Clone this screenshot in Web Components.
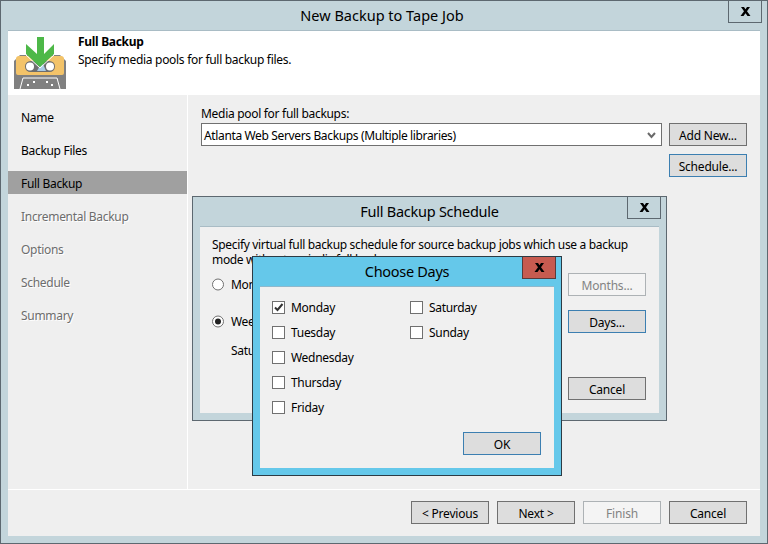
<!DOCTYPE html>
<html><head><meta charset="utf-8"><style>
html,body{margin:0;padding:0;background:#efefef}
body{font:12px "Noto Sans",sans-serif;color:#000;letter-spacing:-.3px}
</style></head><body>
<wizard-window title="New Backup to Tape Job">
  <step-header slot="header" heading="Full Backup" text="Specify media pools for full backup files."></step-header>
  <nav-item slot="nav">Name</nav-item>
  <nav-item slot="nav">Backup Files</nav-item>
  <nav-item slot="nav" selected>Full Backup</nav-item>
  <nav-item slot="nav" disabled>Incremental Backup</nav-item>
  <nav-item slot="nav" disabled>Options</nav-item>
  <nav-item slot="nav" disabled>Schedule</nav-item>
  <nav-item slot="nav" disabled>Summary</nav-item>
  <pool-pane slot="body"></pool-pane>
  <win-button slot="footer">&lt; Previous</win-button>
  <win-button slot="footer">Next &gt;</win-button>
  <win-button slot="footer" disabled>Finish</win-button>
  <win-button slot="footer">Cancel</win-button>
  <schedule-dialog slot="overlay" style="left:191px;top:195px"></schedule-dialog>
  <days-dialog slot="overlay" style="left:251px;top:255px"></days-dialog>
</wizard-window>
<script>
function def(name, html){
  customElements.define(name, class extends HTMLElement{
    connectedCallback(){
      if(this.shadowRoot) return;
      const r=this.attachShadow({mode:'open'});
      r.innerHTML=typeof html==='function'?html(this):html;
    }
  });
}
const X='<svg width="11" height="9" viewBox="0 0 11 9"><path d="M1 0h3l1.500 2.200L7 0h3L7 4.300 10.500 9h-3L5.500 6.300 3.500 9h-3L4 4.300z" fill="#000"/></svg>';
def('close-x',`<style>:host{position:absolute;top:0;width:34px;height:22px;box-sizing:border-box;border:1px solid var(--x-border,#5d6870);border-top:0;background:var(--x-bg,transparent);display:flex;align-items:center;justify-content:center}</style>${X}`);
def('win-button',`<style>
:host{display:flex;align-items:center;justify-content:center;box-sizing:border-box;width:78px;height:23px;padding-top:1px;border:1px solid #707070;background:#dddddd;font-size:12px;letter-spacing:-.2px;color:#000;flex:none}
:host([default]){border-color:#3c7fb1}
:host([disabled]){border-color:#adb2b5;background:#f4f4f4;color:#838383}
</style><slot></slot>`);
def('nav-item',`<style>
:host{display:flex;align-items:center;height:23px;box-sizing:border-box;padding:1px 0 0 13px;color:#000}
:host([selected]){background:#a0a0a0}
:host([disabled]){color:#6d6d6d;text-shadow:1px 1px 0 #fff}
</style><slot></slot>`);
def('check-box',h=>`<style>
:host{display:flex;align-items:center;height:25px;gap:6px}
i{display:flex;width:13px;height:13px;box-sizing:border-box;border:1px solid #707070;background:#fff;align-items:center;justify-content:center}
</style><i>${h.hasAttribute('checked')?'<svg width="11" height="11" viewBox="0 0 11 11"><path d="M2 5.500l2.500 2.500L9.500 2" fill="none" stroke="#333" stroke-width="2"/></svg>':''}</i><span><slot></slot></span>`);
def('radio-button',h=>`<style>
:host{display:flex;align-items:center;height:23px;gap:7px}
svg{flex:none}
</style><svg width="12" height="13" viewBox="0 0 12 13"><circle cx="6" cy="6.500" r="5.500" fill="#fff" stroke="#707070"/>${h.hasAttribute('checked')?'<circle cx="6" cy="6.500" r="3" fill="#222"/>':''}</svg><span><slot></slot></span>`);
def('combo-box',`<style>
:host{display:flex;align-items:center;flex:1;height:23px;box-sizing:border-box;border:1px solid #707070;background:#fff;padding:1px 5px 0 2px;justify-content:space-between;letter-spacing:-.36px}
</style><span><slot></slot></span><svg width="9" height="7" viewBox="0 0 9 7"><path d="M1 1l3.500 4L8 1" fill="none" stroke="#6a6a6a" stroke-width="2"/></svg>`);
def('step-icon',`<style>:host{display:block;width:52px;height:54px;flex:none}svg{display:block}</style>
<svg width="60" height="60" viewBox="14 35 60 60" style="overflow:visible">
<path d="M20 55H60L66 61V89H14V61Z" fill="#808080"/>
<path d="M19 56H61Q64 56 64 59V73Q64 75 62 75H18Q16 75 16 73V59Q16 56 19 56Z" fill="#f3c369"/>
<rect x="25" y="61" width="30" height="11" rx="5.500" fill="#6e6e6e"/>
<circle cx="30" cy="66.500" r="4" fill="#fff"/><circle cx="50" cy="66.500" r="4" fill="#fff"/>
<path d="M37 71L41 64H43L46 71Z" fill="#a9cbe6"/>
<path d="M20 89L23 78H57L60 89" fill="none" stroke="#fff"/>
<g fill="#fff"><rect x="27" y="84" width="2" height="2"/><rect x="33" y="81" width="2" height="2"/><rect x="46" y="81" width="2" height="2"/><rect x="51" y="84" width="2" height="2"/></g>
<path d="M26 44L37 54V37H44V54L54 44V54L40 67L26 54Z" fill="#4db848"/>
<path d="M26 55L40 68L54 55" fill="none" stroke="#fff" stroke-width="1"/>
</svg>`);
def('step-header',h=>`<style>
:host{display:flex;height:64px;background:#fff;box-sizing:border-box;padding:0 0 0 6px}
.t{margin-left:12px;padding-top:3px;line-height:15px}
b{display:block;font-weight:700;margin-bottom:3px}
step-icon{margin-top:4px}
</style><step-icon></step-icon><div class="t"><b>${h.getAttribute('heading')}</b><span>${h.getAttribute('text')}</span></div>`);
def('pool-pane',`<style>
:host{display:flex;flex-direction:column;padding:11px 13px 0;line-height:15px}
.l{margin-bottom:2px}
.r{display:flex;gap:7px;align-items:flex-start}
.s{display:flex;justify-content:flex-end;margin-top:8px}
</style><div class="l">Media pool for full backups:</div>
<div class="r"><combo-box>Atlanta Web Servers Backups (Multiple libraries)</combo-box><win-button>Add New...</win-button></div>
<div class="s"><win-button default>Schedule...</win-button></div>`);
def('schedule-dialog',`<style>
:host{position:absolute;display:flex;flex-direction:column;box-sizing:border-box;width:475px;height:225px;border:1px solid #5d6870;background:#c3d5db;padding:0 7px 7px}
.tt{height:30px;box-sizing:border-box;padding-bottom:2px;display:flex;align-items:center;justify-content:center;font-size:14.5px;letter-spacing:-.25px;flex:none}
.in{flex:1;background:#f0f0f0;box-shadow:0 -1px 0 #a9bcc5;padding:10px 13px 0 12px;line-height:15px;display:flex;flex-direction:column;letter-spacing:-.33px}
.tx{height:30px;margin-bottom:6px;white-space:nowrap}
.row{display:flex;justify-content:space-between}
.rad{display:flex;flex-direction:column;gap:14px}
.sat{padding-left:19px;margin-top:-8px;line-height:23px}
.btn{display:flex;flex-direction:column}
.btn win-button:nth-child(2){margin:14px 0 44px}
close-x{right:5px}
</style><close-x></close-x><div class="tt">Full Backup Schedule</div>
<div class="in"><div class="tx">Specify virtual full backup schedule for source backup jobs which use a backup<br>mode without periodic full backups.</div>
<div class="row"><div class="rad"><radio-button>Monthly</radio-button><radio-button checked>Weekly</radio-button><div class="sat">Saturday</div></div>
<div class="btn"><win-button disabled>Months...</win-button><win-button default>Days...</win-button><win-button>Cancel</win-button></div></div></div>`);
def('days-dialog',`<style>
:host{position:absolute;display:flex;flex-direction:column;box-sizing:border-box;width:310px;height:220px;border:1px solid #2d3b44;background:#65c8ea;padding:0 7px 7px}
.tt{height:30px;box-sizing:border-box;padding-bottom:2px;display:flex;align-items:center;justify-content:center;font-size:14.5px;letter-spacing:-.3px;flex:none}
.in{flex:1;background:#f0f0f0;box-shadow:0 -1px 0 #8fb8cc;padding:8px 13px 0 12px;display:flex;flex-direction:column}
.g{display:grid;grid-template-columns:138px 1fr;grid-template-rows:repeat(5,25px);grid-auto-flow:column}
.f{display:flex;justify-content:flex-end;margin-top:12px}
close-x{right:5px;--x-bg:#c75b50;--x-border:#5a3a3a}
</style><close-x></close-x><div class="tt">Choose Days</div>
<div class="in"><div class="g"><check-box checked>Monday</check-box><check-box>Tuesday</check-box><check-box>Wednesday</check-box><check-box>Thursday</check-box><check-box>Friday</check-box><check-box>Saturday</check-box><check-box>Sunday</check-box></div>
<div class="f"><win-button default>OK</win-button></div></div>`);
def('wizard-window',h=>`<style>
:host{display:block;position:relative;width:768px;height:544px;box-sizing:border-box;border:1px solid #5d6870;background:#c3d5db;overflow:hidden}
.wrap{display:flex;flex-direction:column;height:100%}
.tt{height:30px;box-sizing:border-box;padding:0 4px 2px 0;display:flex;align-items:center;justify-content:center;font-size:14.5px;letter-spacing:0;flex:none}
.in{flex:1;margin:0 7px 7px;background:#efefef;box-shadow:0 -1px 0 #a9bcc5;display:flex;flex-direction:column;min-height:0}
.mid{flex:1;display:flex;min-height:0}
.nav{width:179px;padding-top:10px;display:flex;flex-direction:column;gap:10px;border-right:1px solid #fff;flex:none}
.body{flex:1;min-width:0}
.foot{height:47px;box-sizing:border-box;border-top:1px solid #fff;display:flex;justify-content:flex-end;gap:8px;padding:11px 13px 0;flex:none}
close-x{right:5px}
</style><div class="wrap"><close-x></close-x><div class="tt">${h.getAttribute('title')}</div>
<div class="in"><slot name="header"></slot><div class="mid"><div class="nav"><slot name="nav"></slot></div><div class="body"><slot name="body"></slot></div></div><div class="foot"><slot name="footer"></slot></div></div></div><slot name="overlay"></slot>`);
</script>
</body></html>
